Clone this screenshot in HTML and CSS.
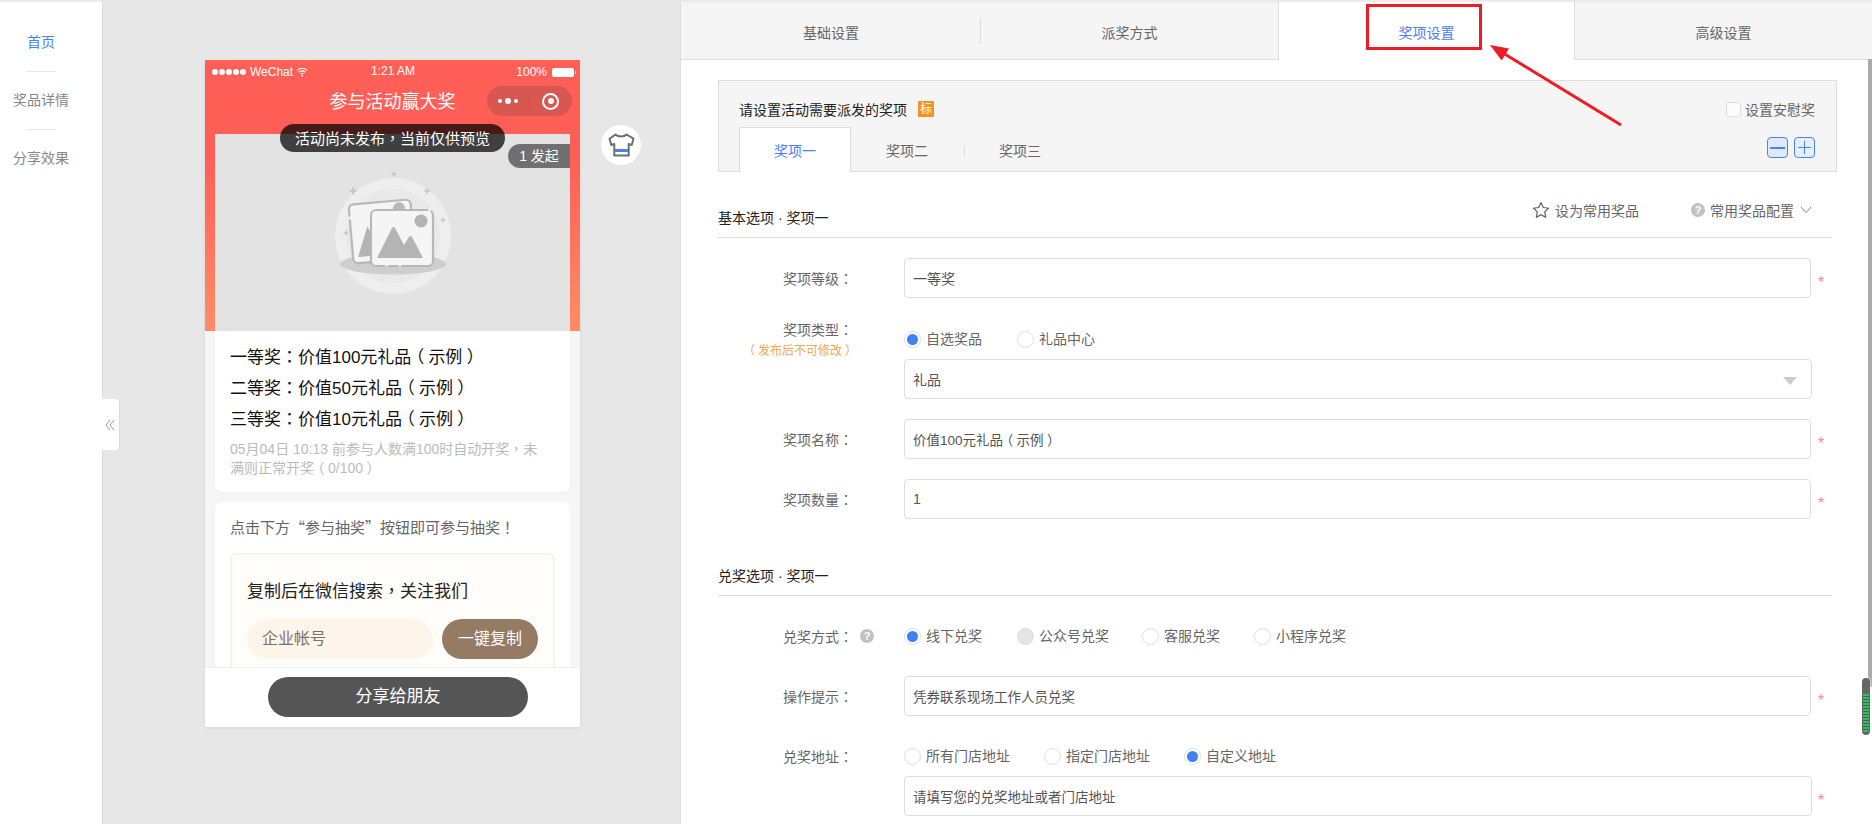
FILE: index.html
```html
<!DOCTYPE html>
<html lang="zh-CN">
<head>
<meta charset="utf-8">
<title>奖项设置</title>
<link rel="stylesheet" href="styles.css">
</head>
<body>
<div class="app">
  <nav class="side">
    <a class="side-item active">首页</a>
    <a class="side-item">奖品详情</a>
    <a class="side-item">分享效果</a>
  </nav>

  <section class="preview">
    <div class="fold"><svg viewBox="0 0 10 12" width="10" height="12"><path d="M5 1 1 6l4 5M9 1 5 6l4 5" fill="none" stroke="#999" stroke-width="1"/></svg></div>
    <div class="phone">
      <div class="phone-scroll">
        <div class="phone-head">
          <div class="status">
            <span class="status-left"><span class="dots"><i></i><i></i><i></i><i></i><i></i></span>WeChat
              <svg class="wifi" viewBox="0 0 12 10" width="12" height="10"><path d="M1 3.4C4 .8 8 .8 11 3.4M2.8 5.2c2-1.6 4.4-1.6 6.4 0M4.500 7c1-.7 2-.7 3 0" fill="none" stroke="#fff" stroke-width="1.100"/><circle cx="6" cy="8.800" r=".9" fill="#fff"/></svg>
            </span>
            <span class="status-time">1:21 AM</span>
            <span class="status-right">100%<span class="battery"></span></span>
          </div>
          <div class="navbar">
            <span class="nav-title">参与活动赢大奖</span>
            <div class="capsule">
              <span class="cap-dots"><i></i><b></b><i></i></span>
              <span class="cap-sep"></span>
              <span class="cap-rec"></span>
            </div>
          </div>
          <div class="toast">活动尚未发布<span class="p" lang="zh-TW">，</span>当前仅供预览</div>
          <div class="cover">
            <span class="badge">1 发起</span>
            <svg class="placeholder" viewBox="0 0 120 128" width="120" height="128">
              <circle cx="60" cy="64" r="58" fill="#eeeeee"/>
              <circle cx="60" cy="64" r="47" fill="#e9e9e9"/>
              <ellipse cx="60" cy="92" rx="53" ry="10.500" fill="#cecece"/>
              <g transform="rotate(-5 48 60)">
                <rect x="18" y="30" width="62" height="59" rx="5" fill="#f5f5f5" stroke="#b8b8b8" stroke-width="2.200" stroke-dasharray="92 3 120 3"/>
                <circle cx="68" cy="38" r="6" fill="#b8b8b8"/>
                <path d="M23 83l12-30 12 30z" fill="#b4b4b4"/>
              </g>
              <rect x="38" y="38" width="62" height="56" rx="5" fill="#f5f5f5" stroke="#b8b8b8" stroke-width="2.200" stroke-dasharray="52 3 85 3 10 3 200"/>
              <circle cx="88" cy="49" r="6.500" fill="#b4b4b4"/>
              <path d="M44 86l15-30c1-1.500 2-1.500 3 0l9 17 5-8c1-1.500 2-1.500 3 0l11 21z" fill="#b4b4b4"/>
              <g fill="none" stroke="#c8c8c8" stroke-width="1.600">
                <path d="M61 -.5v5M58.500 2h5"/>
                <path d="M20 15.500v7M16.500 19h7" stroke-width="2"/>
                <path d="M94 16v6M91 19h6"/>
                <path d="M110 45.500v5M107.500 48h5"/>
                <path d="M13 58.500v5M10.500 61h5"/>
              </g>
            </svg>
          </div>
        </div>
        <div class="card prizes">
          <p class="prize">一等奖<span class="p" lang="zh-TW">：</span>价值100元礼品<span class="po">（</span>示例<span class="pc">）</span></p>
          <p class="prize">二等奖<span class="p" lang="zh-TW">：</span>价值50元礼品<span class="po">（</span>示例<span class="pc">）</span></p>
          <p class="prize">三等奖<span class="p" lang="zh-TW">：</span>价值10元礼品<span class="po">（</span>示例<span class="pc">）</span></p>
          <p class="rule">05月04日 10:13 前参与人数满100时自动开奖<span class="p" lang="zh-TW">，</span>未满则正常开奖<span class="po">（</span>0/100<span class="pc">）</span></p>
        </div>
        <div class="card join">
          <p class="join-tip">点击下方<span class="q">“</span>参与抽奖<span class="q">”</span>按钮即可参与抽奖<span class="p" lang="zh-TW">！</span></p>
          <div class="follow">
            <p class="follow-title">复制后在微信搜索<span class="p" lang="zh-TW">，</span>关注我们</p>
            <div class="copy-row">
              <span class="account">企业帐号</span>
              <span class="copy-btn">一键复制</span>
            </div>
          </div>
        </div>
      </div>
      <div class="phone-foot"><span class="share">分享给朋友</span></div>
    </div>
    <div class="shirt">
      <svg viewBox="0 0 28 24" width="28" height="24"><path d="M8.500 1.500c2.500 2.500 8.500 2.500 11 0l7 4.200-1.800 6.300-3-1V22.500H7.300V11l-3 1L2.500 5.700z" fill="#fff" stroke="#6f6f6f" stroke-width="2" stroke-linejoin="round"/><rect x="8" y="16" width="13" height="3" fill="#4a80f5"/></svg>
    </div>
  </section>

  <main class="panel">
    <div class="tabs">
      <span class="tab">基础设置</span>
      <span class="tab">派奖方式</span>
      <span class="tab current">奖项设置</span>
      <span class="tab last">高级设置</span>
    </div>
    <div class="red-box"></div>
    <svg class="arrow" width="140" height="90" viewBox="0 0 140 90"><line x1="136" y1="85" x2="18" y2="13" stroke="#ee1c25" stroke-width="3"/><path d="M5 5 24 8.400 16.700 20.400z" fill="#ee1c25"/></svg>

    <div class="content">
      <div class="prize-head">
        <div class="prize-top">
          <span class="prize-q">请设置活动需要派发的奖项</span>
          <span class="biao">标</span>
          <label class="comfort"><span class="check"></span>设置安慰奖</label>
        </div>
        <div class="sub-row">
          <span class="sub active">奖项一</span>
          <span class="sub">奖项二</span>
          <span class="sub-sep"></span>
          <span class="sub">奖项三</span>
          <span class="pm minus"></span>
          <span class="pm plus"></span>
        </div>
      </div>

      <div class="section-head first">
        <span class="section-title">基本选项 · 奖项一</span>
        <div class="section-tools">
          <span class="tool"><svg viewBox="0 0 18 18" width="18" height="18"><path d="M9 1.500l2.300 5 5.300.7-3.900 3.700 1 5.400L9 13.700l-4.700 2.600 1-5.400L1.400 7.200l5.300-.7z" fill="none" stroke="#555" stroke-width="1.100" stroke-linejoin="round"/></svg>设为常用奖品</span>
          <span class="tool config"><span class="help">?</span>常用奖品配置<svg class="chev" viewBox="0 0 12 8" width="12" height="8"><path d="M1 1l5 5.500L11 1" fill="none" stroke="#888" stroke-width="1"/></svg></span>
        </div>
      </div>

      <div class="row row-a">
        <span class="label">奖项等级<span class="p" lang="zh-TW">：</span></span>
        <div class="field"><span class="input big">一等奖</span></div>
        <span class="req">*</span>
      </div>

      <div class="row row-b">
        <div class="label stack"><span>奖项类型<span class="p" lang="zh-TW">：</span></span><small><span class="po">（</span>发布后不可修改<span class="pc">）</span></small></div>
        <div class="field">
          <div class="radios">
            <span class="radio on"><i></i>自选奖品</span>
            <span class="radio"><i></i>礼品中心</span>
          </div>
          <span class="input select big">礼品<em class="caret"></em></span>
        </div>
      </div>

      <div class="row row-c">
        <span class="label">奖项名称<span class="p" lang="zh-TW">：</span></span>
        <div class="field"><span class="input"><span>价值100元礼品<span class="po">（</span>示例<span class="pc">）</span></span></span></div>
        <span class="req">*</span>
      </div>

      <div class="row row-c">
        <span class="label">奖项数量<span class="p" lang="zh-TW">：</span></span>
        <div class="field"><span class="input big">1</span></div>
        <span class="req">*</span>
      </div>

      <div class="section-head second">
        <span class="section-title">兑奖选项 · 奖项一</span>
      </div>

      <div class="row row-d">
        <span class="label with-help">兑奖方式<span class="p" lang="zh-TW">：</span><span class="help">?</span></span>
        <div class="radios plain">
          <span class="radio on w1"><i></i>线下兑奖</span>
          <span class="radio off w2"><i></i>公众号兑奖</span>
          <span class="radio w3"><i></i>客服兑奖</span>
          <span class="radio"><i></i>小程序兑奖</span>
        </div>
      </div>

      <div class="row row-e">
        <span class="label">操作提示<span class="p" lang="zh-TW">：</span></span>
        <div class="field"><span class="input">凭券联系现场工作人员兑奖</span></div>
        <span class="req">*</span>
      </div>

      <div class="row row-f">
        <span class="label">兑奖地址<span class="p" lang="zh-TW">：</span></span>
        <div class="field">
          <div class="radios addr">
            <span class="radio"><i></i>所有门店地址</span>
            <span class="radio"><i></i>指定门店地址</span>
            <span class="radio on"><i></i>自定义地址</span>
          </div>
          <span class="input">请填写您的兑奖地址或者门店地址</span>
        </div>
        <span class="req low">*</span>
      </div>
    </div>
    <div class="scroll-track"></div>
    <div class="meter"></div>
  </main>
</div>
<div class="top-shade"></div>
</body>
</html>
```
FILE: styles.css
```css
* { box-sizing: border-box; }
html, body { margin: 0; height: 100%; overflow: hidden; }
body { font-family: "Liberation Sans", "Noto Sans CJK SC", sans-serif; font-size: 14px; color: #666; background: #fff; }
p { margin: 0; }
.p { font-family: "Noto Sans CJK TC", sans-serif; }
.q { font-family: "Noto Sans CJK SC", sans-serif; }
.po { margin: 0 .25em 0 -.25em; }
.pc { margin: 0 -.25em 0 .25em; }
.app { display: flex; width: 1872px; height: 824px; overflow: hidden; }
.top-shade { position: fixed; left: 0; top: 0; width: 100%; height: 3px; background: linear-gradient(#e4e4e4, rgba(255,255,255,0)); }

/* sidebar */
.side { flex: 0 0 103px; background: #fff; border-right: 1px solid #ddd; display: flex; flex-direction: column; padding-top: 13px; }
.side-item { width: 100%; height: 58px; display: flex; align-items: center; justify-content: center; padding-right: 20px; font-size: 14px; line-height: 20px; color: #888; position: relative; }
.side-item + .side-item::before { content: ""; position: absolute; top: 0; left: 26px; width: 30px; height: 1px; background: #e6e6e6; }
.side-item.active { color: #4a80f5; }

/* preview */
.preview { flex: 0 0 577px; background: #e7e7e7; position: relative; padding: 60px 0 0 102px; }
.fold { position: absolute; left: -1px; top: 399px; width: 17px; height: 51px; background: #fff; display: flex; align-items: center; justify-content: center; border-radius: 0 3px 3px 0; box-shadow: 1px 0 1px rgba(0,0,0,.06); padding-right: 1px; }
.phone { width: 375px; height: 667px; background: #f6f6f6; box-shadow: 0 1px 4px rgba(0,0,0,.08); display: flex; flex-direction: column; position: relative; }
.phone-scroll { height: 607px; overflow: hidden; }
.phone-head { height: 271px; padding: 0 10px; background: linear-gradient(#ff5f57 0, #ff5f57 100px, #ff8c66 100%); position: relative; display: flex; flex-direction: column; }
.status { height: 20px; margin: 0 -10px; padding: 4px 6px 0 7px; display: flex; justify-content: space-between; color: #fff; font-size: 12px; line-height: 14px; position: relative; }
.status-left, .status-right { display: flex; align-items: center; gap: 3px; }
.status-time { position: absolute; left: 166px; top: 4px; font-size: 12px; }
.dots { display: flex; gap: 1px; margin-right: 1px; }
.dots i { width: 6px; height: 6px; border-radius: 50%; background: #fff; }
.battery { width: 22px; height: 9px; border-radius: 2px; background: #fff; margin-left: 2px; position: relative; }
.battery::after { content: ""; position: absolute; right: -2px; top: 3px; width: 1px; height: 3px; background: #fff; }
.navbar { height: 44px; margin: 0 -10px; position: relative; display: flex; align-items: center; justify-content: center; }
.nav-title { color: #fff; font-size: 18px; line-height: 24px; }
.capsule { position: absolute; right: 8px; top: 6px; width: 85px; height: 30px; border-radius: 15px; background: rgba(60,60,60,.2); display: flex; align-items: center; }
.cap-dots { width: 42px; display: flex; justify-content: center; align-items: center; gap: 3px; }
.cap-dots i { width: 4px; height: 4px; border-radius: 50%; background: #fff; }
.cap-dots b { width: 6px; height: 6px; border-radius: 50%; background: #fff; }
.cap-sep { width: 1px; height: 18px; background: rgba(0,0,0,.05); }
.cap-rec { width: 17px; height: 17px; margin-left: 12px; border-radius: 50%; border: 2px solid #fff; position: relative; background: transparent; }
.cap-rec::after { content: ""; position: absolute; left: 3.500px; top: 3.500px; width: 6px; height: 6px; border-radius: 50%; background: #fff; }
.toast { position: absolute; left: 75px; top: 64px; width: 225px; height: 28px; border-radius: 14px; background: rgba(0,0,0,.72); color: #fff; font-size: 15px; line-height: 28px; text-align: center; white-space: nowrap; z-index: 2; }
.cover { margin-top: 10px; flex: 1; background: #e3e3e3; position: relative; display: flex; justify-content: center; align-items: center; padding-top: 7px; }
.badge { position: absolute; right: 0; top: 10px; width: 62px; height: 24px; background: #707070; color: #fff; border-radius: 12px 0 0 12px; font-size: 14px; line-height: 24px; text-align: center; }
.placeholder { display: block; overflow: visible; }
.card { margin: 0 10px; background: #fff; padding: 0 15px; }
.prizes { height: 161px; border-radius: 0 0 8px 8px; padding-top: 9px; box-shadow: 0 1px 4px rgba(0,0,0,.03); }
.prize { font-size: 17px; line-height: 31px; height: 31px; color: #111; white-space: nowrap; }
.rule { margin-top: 6px; max-width: 318px; font-size: 14px; line-height: 19px; color: #bbb; }
.join { margin-top: 10px; border-radius: 8px 8px 0 0; height: 165px; padding-top: 15px; }
.join-tip { font-size: 15px; line-height: 20px; color: #666; white-space: nowrap; }
.follow { margin-top: 15px; height: 120px; border: 2px solid #f8f2ea; border-bottom: 0; border-radius: 6px 6px 0 0; background: #fffdfa; padding: 23px 15px 0; }
.follow-title { font-size: 17px; line-height: 24px; color: #222; white-space: nowrap; }
.copy-row { margin-top: 15px; display: flex; gap: 9px; }
.account { width: 186px; height: 40px; border-radius: 20px; background: #fdf5ec; color: #7d7166; font-size: 16px; line-height: 40px; padding-left: 15px; }
.copy-btn { width: 96px; height: 40px; border-radius: 20px; background: #957b63; color: #fff; font-size: 16px; line-height: 40px; text-align: center; }
.phone-foot { height: 60px; background: #fff; border-top: 1px solid #eee; display: flex; padding: 9px 0 0 63px; }
.share { width: 260px; height: 40px; border-radius: 20px; background: #555; color: #fff; font-size: 17px; line-height: 40px; text-align: center; }
.shirt { position: absolute; left: 498px; top: 125px; width: 40px; height: 40px; border-radius: 50%; background: #fff; display: flex; align-items: center; justify-content: center; }

/* right panel */
.panel { flex: 1; position: relative; background: #fff; border-left: 1px solid #ddd; min-width: 0; }
.tabs { display: flex; height: 60px; }
.tab { flex: 0 0 297px; display: flex; align-items: center; justify-content: center; background: #f5f5f5; border-bottom: 1px solid #ddd; color: #666; font-size: 14px; padding-top: 4px; }
.tab:first-child { flex-basis: 300px; position: relative; }
.tab:first-child::after { content: ""; position: absolute; right: 0; top: 18px; height: 26px; width: 1px; background: #ddd; }
.tab.current { background: #fff; color: #4a80f5; border-bottom: 0; border-left: 1px solid #ddd; border-right: 1px solid #ddd; }
.tab.last { flex: 1; }
.red-box { position: absolute; left: 685px; top: 4px; width: 116px; height: 46px; border: 3px solid #ee1c25; pointer-events: none; }
.arrow { position: absolute; left: 804px; top: 40px; overflow: visible; }
.content { padding: 20px 34px 0 37px; }
.prize-head { height: 92px; background: #f5f5f5; border: 1px solid #ddd; padding: 0 21px 0 20px; width: 1119px; }
.prize-top { height: 46px; display: flex; align-items: center; padding-top: 10px; }
.prize-q { font-size: 14px; color: #222; }
.biao { margin-left: 11px; width: 16px; height: 16px; background: #f7931e; color: #fff; font-size: 12px; line-height: 16px; text-align: center; }
.comfort { margin-left: auto; display: flex; align-items: center; gap: 4px; color: #666; font-size: 14px; }
.check { width: 15px; height: 15px; border: 1px solid #ddd; background: #fbfbfb; border-radius: 3px; }
.sub-row { height: 45px; display: flex; align-items: center; position: relative; margin-bottom: -1px; }
.sub { flex: 0 0 112px; text-align: center; color: #666; font-size: 14px; line-height: 20px; margin-top: 2px; }
.sub.active { height: 45px; margin-top: 0; line-height: 47px; background: #fff; border: 1px solid #ddd; border-bottom: 0; color: #4a80f5; }
.sub-sep { width: 1px; height: 12px; background: #ddd; margin: 2px -1px 0 1px; }
.pm { width: 21px; height: 21px; margin-bottom: 4px; border: 1px solid #4a80f5; border-radius: 4px; background: #dfe9fb; position: relative; }
.pm::before { content: ""; position: absolute; left: 3px; right: 3px; top: 9px; height: 1px; background: #4a80f5; }
.plus::after { content: ""; position: absolute; top: 3px; bottom: 3px; left: 9px; width: 1px; background: #4a80f5; }
.minus::before { height: 2px; left: 2px; right: 2px; }
.minus { margin-left: auto; }
.plus { margin-left: 6px; background: #e6eefc; }
.section-head { width: 1114px; display: flex; justify-content: space-between; border-bottom: 1px solid #ddd; }
.section-head.first { margin-top: 27px; height: 39px; }
.section-head.second { margin-top: 37px; height: 40px; }
.section-title { font-size: 14px; color: #222; align-self: flex-end; line-height: 20px; padding-bottom: 9px; }
.section-tools { display: flex; }
.tool { display: flex; align-items: center; gap: 5px; height: 22px; font-size: 14px; color: #666; margin-right: 20px; }
.tool.config { margin-left: 32px; gap: 5px; }
.chev { margin-left: 1px; }
.help { display: inline-block; width: 14px; height: 14px; border-radius: 50%; background: #c2c2c2; color: #fff; font-size: 11px; line-height: 14px; text-align: center; font-weight: 700; }
.row { display: flex; align-items: flex-start; position: relative; }
.label { width: 135px; flex: none; text-align: right; font-size: 14px; color: #666; line-height: 20px; white-space: nowrap; padding-top: 10px; margin-right: 51px; }
.label.stack { display: flex; flex-direction: column; align-items: flex-end; padding-top: 0; }
.label small { font-size: 12px; line-height: 20px; margin-top: 1px; color: #f5a650; margin-right: -1px; }
.label.with-help { position: relative; }
.label.with-help .help { position: absolute; left: 142px; top: 5px; }
.field { width: 908px; flex: none; }
.input { display: flex; align-items: center; width: 907px; height: 40px; border: 1px solid #ddd; border-radius: 4px; background: #fff; padding-left: 8px; font-size: 13.500px; color: #555; position: relative; white-space: nowrap; }
.input.big { font-size: 14px; }
.req { margin-left: 6px; height: 40px; color: #f88; font-size: 16px; line-height: 50px; }
.row-a { margin-top: 20px; }
.row-b { margin-top: 21px; }
.row-b .radios { margin-top: 10px; }
.row-b .input { width: 908px; margin-top: 10px; }
.row-c { margin-top: 20px; }
.row-d { margin-top: 28px; height: 24px; }
.row-d .label { padding-top: 2px; }
.row-e { margin-top: 28px; }
.row-f { margin-top: 30px; }
.row-f .label { padding-top: 0; }
.row-f .input { width: 908px; margin-top: 10px; }
.radios { display: flex; height: 20px; align-items: center; gap: 35px; }
.radio { display: inline-flex; align-items: center; gap: 5px; font-size: 14px; color: #666; line-height: 20px; white-space: nowrap; }
.radio i { width: 17px; height: 17px; border-radius: 50%; border: 1px solid #ddd; background: #fff; position: relative; }
.radio.on i::after { content: ""; position: absolute; left: 2px; top: 2px; width: 11px; height: 11px; border-radius: 50%; background: #4080f5; }
.radio.off i { background: #e5e5e5; }
.radios.plain { height: 24px; gap: 0; }
.w1 { width: 113px; }
.w2 { width: 125px; }
.w3 { width: 112px; }
.radios.addr { gap: 34px; }
.caret { position: absolute; right: 14px; top: 17px; width: 0; height: 0; border-left: 7px solid transparent; border-right: 7px solid transparent; border-top: 8px solid #ccc; }
.req.low { margin-top: 30px; }
.scroll-track { position: absolute; right: 0; top: 59px; bottom: 137px; width: 4px; background: #aaa; }
.meter { position: absolute; right: 2px; top: 678px; width: 8px; height: 57px; border-radius: 4px; background: repeating-linear-gradient(#27c25c 0 2px, #5a5a5a 2px 3px); border: 1px solid #666; border-top-width: 16px; border-bottom-width: 3px; box-shadow: 0 0 3px #fff; }
```
